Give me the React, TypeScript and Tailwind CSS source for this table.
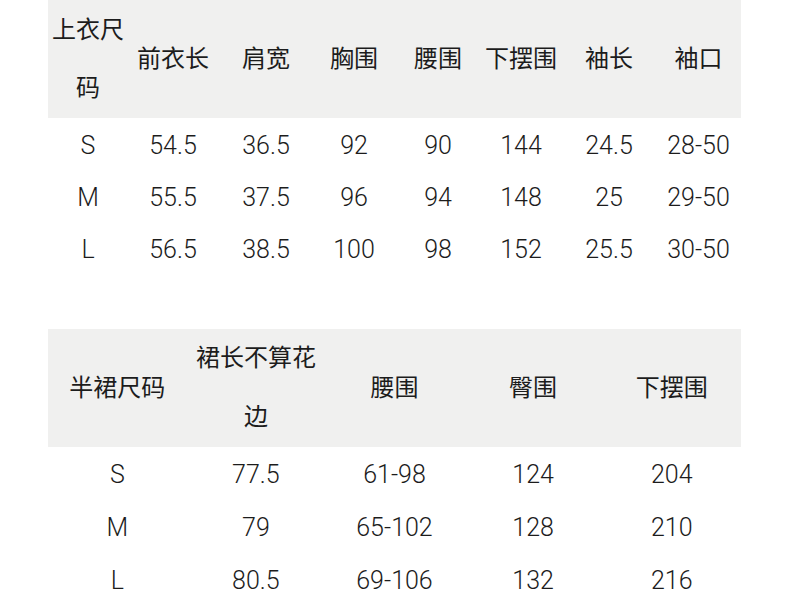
import React from 'react';

const topHead = ['前衣长', '肩宽', '胸围', '腰围', '下摆围', '袖长', '袖口'];
const topRows = [
  ['S', '54.5', '36.5', '92', '90', '144', '24.5', '28-50'],
  ['M', '55.5', '37.5', '96', '94', '148', '25', '29-50'],
  ['L', '56.5', '38.5', '100', '98', '152', '25.5', '30-50'],
];

const skirtRows = [
  ['S', '77.5', '61-98', '124', '204'],
  ['M', '79', '65-102', '128', '210'],
  ['L', '80.5', '69-106', '132', '216'],
];

const font = { fontFamily: 'Roboto, "Noto Sans CJK SC", sans-serif' };

const App: React.FC = () => {
  return (
    <div className="w-[790px] h-[605px] bg-white text-[#1c1c1c] text-[24px] overflow-hidden" style={font}>
      {/* Top size chart */}
      <div className="ml-[48px] w-[693px]">
        <div className="grid grid-cols-[80px_90px_96px_80px_88px_78px_98px_81px] h-[118px] bg-[#f0f0ef] items-center text-center">
          <div className="leading-[58px]">
            <div>上衣尺</div>
            <div>码</div>
          </div>
          {topHead.map(h => (
            <div key={h}>{h}</div>
          ))}
        </div>
        <div className="pt-[2px]">
          {topRows.map(row => (
            <div key={row[0]} className="grid grid-cols-[80px_90px_96px_80px_88px_78px_98px_81px] h-[52px] items-center text-center text-[25px] font-light">
              {row.map((c, i) => (
                <div key={i}>{c}</div>
              ))}
            </div>
          ))}
        </div>
      </div>

      {/* Skirt size chart */}
      <div className="ml-[48px] mt-[53px] w-[693px]">
        <div className="grid grid-cols-5 h-[118px] bg-[#f0f0ef] items-center text-center">
          <div>半裙尺码</div>
          <div className="leading-[59px]">
            <div>裙长不算花</div>
            <div>边</div>
          </div>
          <div>腰围</div>
          <div>臀围</div>
          <div>下摆围</div>
        </div>
        <div className="pt-[1px]">
          {skirtRows.map(row => (
            <div key={row[0]} className="grid grid-cols-5 h-[53px] items-center text-center text-[25px] font-light">
              {row.map((c, i) => (
                <div key={i}>{c}</div>
              ))}
            </div>
          ))}
        </div>
      </div>
    </div>
  );
};

export default App;
